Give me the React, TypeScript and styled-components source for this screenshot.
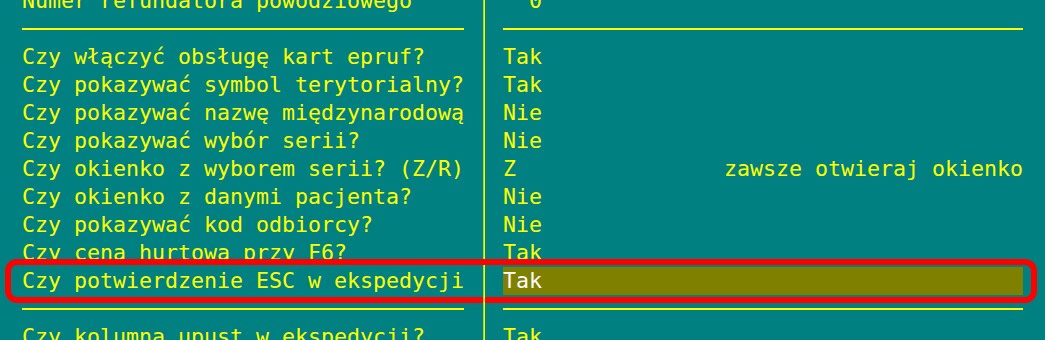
import styled, { createGlobalStyle } from "styled-components";

type Option = {
  question: string;
  value: string;
  note?: string;
};

const options: Option[] = [
  { question: "Czy włączyć obsługę kart epruf?", value: "Tak" },
  { question: "Czy pokazywać symbol terytorialny?", value: "Tak" },
  { question: "Czy pokazywać nazwę międzynarodową", value: "Nie" },
  { question: "Czy pokazywać wybór serii?", value: "Nie" },
  {
    question: "Czy okienko z wyborem serii? (Z/R)",
    value: "Z",
    note: "zawsze otwieraj okienko",
  },
  { question: "Czy okienko z danymi pacjenta?", value: "Nie" },
  { question: "Czy pokazywać kod odbiorcy?", value: "Nie" },
  { question: "Czy cena hurtowa przy F6?", value: "Tak" },
];

const OptionRow = ({
  option,
  selected,
}: {
  option: Option;
  selected?: boolean;
}) => (
  <Row $selected={selected}>
    <Question>{option.question}</Question>
    <Divider />
    <Value $selected={selected}>
      <span>{option.value}</span>
      {option.note && <span>{option.note}</span>}
    </Value>
  </Row>
);

const SeparatorRow = () => (
  <Row>
    <RuleCell />
    <Divider />
    <RuleCell />
  </Row>
);

export default function App() {
  return (
    <>
      <GlobalStyle />
      <Screen>
        <Table>
          <OptionRow
            option={{ question: "Numer refundatora powodziowego", value: "  0" }}
          />
          <SeparatorRow />
          {options.map((o) => (
            <OptionRow key={o.question} option={o} />
          ))}
          <OptionRow
            option={{ question: "Czy potwierdzenie ESC w ekspedycji", value: "Tak" }}
            selected
          />
          <SeparatorRow />
          <OptionRow
            option={{ question: "Czy kolumna upust w ekspedycji?", value: "Tak" }}
          />
        </Table>
      </Screen>
    </>
  );
}

const palette = {
  teal: "#008080",
  yellow: "#ffff00",
  olive: "#808000",
  white: "#ffffff",
  red: "#ff0000",
};

const GlobalStyle = createGlobalStyle`
  html, body {
    margin: 0;
    padding: 0;
    background: ${palette.teal};
  }
`;

const Screen = styled.div`
  width: 1045px;
  height: 340px;
  overflow: hidden;
  background: ${palette.teal};
  font-family: "DejaVu Sans Mono", "Liberation Mono", monospace;
  font-size: 21.6px;
  color: ${palette.yellow};
  white-space: pre;
`;

const Table = styled.div`
  margin: -13px 0 0 22px;
  width: 1001px;
`;

const Row = styled.div<{ $selected?: boolean }>`
  position: relative;
  display: grid;
  grid-template-columns: 442px 39px 520px;
  height: 28px;
  line-height: 28px;

  ${(p) =>
    p.$selected &&
    `
    &::after {
      content: "";
      position: absolute;
      top: -8px;
      bottom: -8px;
      left: -17px;
      right: -14px;
      border: 6px solid ${palette.red};
      border-radius: 12px;
      pointer-events: none;
    }
  `}
`;

const Question = styled.div`
  overflow: hidden;
`;

const Divider = styled.div`
  display: flex;
  justify-content: center;

  &::before {
    content: "";
    width: 2px;
    height: 100%;
    background: linear-gradient(90deg, #a8d830 50%, ${palette.yellow} 50%);
  }
`;

const Value = styled.div<{ $selected?: boolean }>`
  display: flex;
  justify-content: space-between;
  background: ${(p) => (p.$selected ? palette.olive : "transparent")};
  color: ${(p) => (p.$selected ? palette.white : palette.yellow)};
`;

const RuleCell = styled.div`
  display: flex;
  align-items: center;

  &::before {
    content: "";
    width: 100%;
    height: 2px;
    background: ${palette.yellow};
  }
`;
